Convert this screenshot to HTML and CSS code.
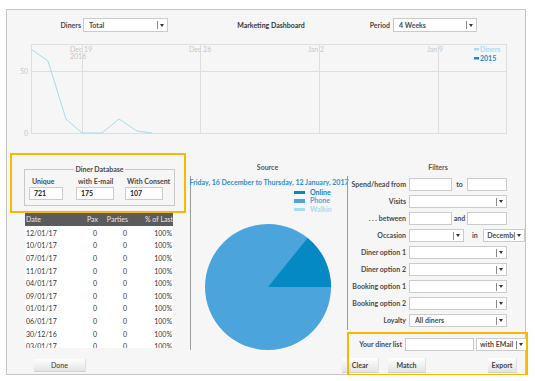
FILE: index.html
```html
<!DOCTYPE html>
<html>
<head>
<meta charset="utf-8">
<link rel="stylesheet" href="styles.css">
</head>
<body>
<div class="panel">
  <div class="topbar">
    <span class="tlabel l1">Diners</span>
    <div class="select s-diners"><span class="val">Total</span><span class="arrow"></span></div>
    <div class="title">Marketing Dashboard</div>
    <span class="tlabel l2">Period</span>
    <div class="select s-period"><span class="val">4 Weeks</span><span class="arrow"></span></div>
  </div>

  <svg class="trend" width="518" height="104" viewBox="0 0 518 104">
    <rect x="24.5" y="8.5" width="475" height="89" fill="none" stroke="#dedede"/>
    <g stroke="#dedede">
      <line x1="75.5" y1="8.5" x2="75.5" y2="97.5"/>
      <line x1="193.5" y1="8.5" x2="193.5" y2="97.5"/>
      <line x1="312.5" y1="8.5" x2="312.5" y2="97.5"/>
      <line x1="431.5" y1="8.5" x2="431.5" y2="97.5"/>
      <line x1="24.5" y1="35.5" x2="499.5" y2="35.5"/>
    </g>
    <g class="axis">
      <text x="21" y="38" text-anchor="end">50</text>
      <text x="21" y="100" text-anchor="end">0</text>
      <text x="63" y="15.5">Dec 19</text>
      <text x="63" y="22.5">2016</text>
      <text x="182" y="15.5">Dec 26</text>
      <text x="301" y="15.5">Jan 2</text>
      <text x="420" y="15.5">Jan 9</text>
    </g>
    <polyline points="24,13 41,25 59,83 75,97 95,97 112,83 130,95 145,97" fill="none" stroke="#a6dcee" stroke-width="1"/>
    <rect x="467" y="12" width="5" height="2.5" fill="#a9dcf0"/>
    <text class="lg1" x="473" y="15.5">Diners</text>
    <rect x="467" y="21" width="5" height="2.5" fill="#1a89c6"/>
    <text class="lg2" x="473" y="24.5">2015</text>
  </svg>

  <div class="main">
    <div class="col-left">
      <fieldset class="db">
        <legend>Diner Database</legend>
        <div class="dbfields">
          <div class="dbf f1"><span class="dbl">Unique</span><span class="inp dbv">721</span></div>
          <div class="dbf f2"><span class="dbl">with E-mail</span><span class="inp dbv">175</span></div>
          <div class="dbf f3"><span class="dbl">With Consent</span><span class="inp dbv">107</span></div>
        </div>
      </fieldset>
      <div class="tablewrap">
        <div class="trow thead"><span>Date</span><span>Pax</span><span>Parties</span><span>% of Last</span></div>
        <div class="tbody">
          <div class="trow"><span>12/01/17</span><span>0</span><span>0</span><span>100%</span></div>
          <div class="trow"><span>10/01/17</span><span>0</span><span>0</span><span>100%</span></div>
          <div class="trow"><span>07/01/17</span><span>0</span><span>0</span><span>100%</span></div>
          <div class="trow"><span>11/01/17</span><span>0</span><span>0</span><span>100%</span></div>
          <div class="trow"><span>04/01/17</span><span>0</span><span>0</span><span>100%</span></div>
          <div class="trow"><span>09/01/17</span><span>0</span><span>0</span><span>100%</span></div>
          <div class="trow"><span>01/01/17</span><span>0</span><span>0</span><span>100%</span></div>
          <div class="trow"><span>06/01/17</span><span>0</span><span>0</span><span>100%</span></div>
          <div class="trow"><span>30/12/16</span><span>0</span><span>0</span><span>100%</span></div>
          <div class="trow"><span>03/01/17</span><span>0</span><span>0</span><span>100%</span></div>
        </div>
      </div>
      <button class="btn done">Done</button>
    </div>

    <div class="col-center">
      <div class="ptitle">Source</div>
      <div class="frame">
        <div class="range"><span>Friday, 16 December to Thursday, 12 January, 2017</span></div>
        <ul class="legend">
          <li class="online"><i></i>Online</li>
          <li class="phone"><i></i>Phone</li>
          <li class="walkin"><i></i>Walkin</li>
        </ul>
        <svg class="pie" width="156" height="136" viewBox="0 0 156 136">
          <circle cx="77" cy="73" r="63" fill="#4ba4dc"/>
          <path d="M77 73 L140 73 A63 63 0 0 0 116.6 24 Z" fill="#0589c5"/>
        </svg>
      </div>
    </div>

    <div class="col-right">
      <div class="ptitle">Filters</div>
      <div class="filters">
        <div class="frow">
          <span class="flabel">Spend/head from</span>
          <span class="inp w43"></span>
          <span class="mid">to</span>
          <span class="inp w40"></span>
        </div>
        <div class="frow">
          <span class="flabel">Visits</span>
          <div class="select w98"><span class="val"></span><span class="arrow"></span></div>
        </div>
        <div class="frow">
          <span class="flabel">. . . between</span>
          <span class="inp w43"></span>
          <span class="mid">and</span>
          <span class="inp w40"></span>
        </div>
        <div class="frow">
          <span class="flabel">Occasion</span>
          <div class="select w57"><span class="val"></span><span class="arrow"></span></div>
          <span class="mid in">in</span>
          <div class="select w42"><span class="val">December</span><span class="arrow"></span></div>
        </div>
        <div class="frow gap">
          <span class="flabel">Diner option 1</span>
          <div class="select w98"><span class="val"></span><span class="arrow"></span></div>
        </div>
        <div class="frow">
          <span class="flabel">Diner option 2</span>
          <div class="select w98"><span class="val"></span><span class="arrow"></span></div>
        </div>
        <div class="frow">
          <span class="flabel">Booking option 1</span>
          <div class="select w98"><span class="val"></span><span class="arrow"></span></div>
        </div>
        <div class="frow">
          <span class="flabel">Booking option 2</span>
          <div class="select w98"><span class="val"></span><span class="arrow"></span></div>
        </div>
        <div class="frow">
          <span class="flabel">Loyalty</span>
          <div class="select w98"><span class="val bold">All diners</span><span class="arrow"></span></div>
        </div>
      </div>
      <div class="dinerlist">
        <span class="flabel dl">Your diner list</span>
        <span class="inp w69"></span>
        <div class="select w51"><span class="val bold">with EMail</span><span class="arrow"></span></div>
      </div>
      <div class="actions">
        <button class="btn clear">Clear</button>
        <button class="btn match">Match</button>
        <button class="btn export">Export</button>
      </div>
    </div>
  </div>

  <div class="hl hl-db"></div>
  <div class="hl hl-list"></div>
</div>
</body>
</html>
```

FILE: styles.css
```css
* { box-sizing: border-box; }
html, body { margin: 0; padding: 0; background: #fff; }
body {
  font-family: Lato, "Liberation Sans", sans-serif;
  font-size: 7px;
  color: #4a4a4a;
  line-height: 1;
}

.panel {
  position: relative;
  margin: 9px 0 0 6px;
  width: 520px;
  height: 366px;
  border: 1px solid #c4c4c4;
  background: #f6f6f6;
}

/* top bar */
.topbar {
  display: flex;
  align-items: center;
  height: 14px;
  margin-top: 8px;
}
.tlabel {
  display: flex;
  justify-content: flex-end;
  white-space: nowrap;
  font-weight: bold;
  color: #4a4a4a;
}
.l1 { width: 41px; margin-left: 33px; margin-right: 2px; }
.l2 { width: 16px; margin-right: 3px; }
.title {
  width: 206px;
  text-align: center;
  font-weight: bold;
  color: #383838;
}

.select {
  display: flex;
  align-items: center;
  height: 14px;
  background: #fff;
  border: 1px solid #cbcbcb;
  padding-left: 5px;
  font-weight: bold;
  color: #4a4a4a;
  overflow: hidden;
  white-space: nowrap;
}
.select .val { flex: 1; overflow: hidden; min-width: 0; }
.arrow {
  display: flex;
  align-items: center;
  justify-content: flex-end;
  flex: none;
  width: 7px;
  height: 8px;
  border-left: 1px solid #8a8a8a;
  margin-right: 3px;
}
.arrow::after {
  content: "";
  border-left: 2.5px solid transparent;
  border-right: 2.5px solid transparent;
  border-top: 3px solid #333;
}
.s-diners { width: 85px; }
.s-period { width: 84px; }

/* trend chart */
.trend { display: block; margin-top: 4px; }
.trend text { font-family: Lato, "Liberation Sans", sans-serif; font-size: 7px; }
.axis text { fill: #c6c6c6; }
.lg1 { fill: #a9dcf0; font-weight: bold; }
.lg2 { fill: #1a89c6; font-weight: bold; }

/* main area */
.main { display: flex; height: 234px; }
.col-left { width: 181px; display: flex; flex-direction: column; }
.col-center { width: 159px; display: flex; flex-direction: column; }
.col-right { width: 178px; display: flex; flex-direction: column; }

/* diner database */
.db {
  margin: 25px 0 0 17px;
  padding: 0 4px 5px 4px;
  width: 151px;
  border: 1px solid #c8c8c8;
  min-width: 0;
}
.db legend {
  margin: 0 auto;
  padding: 0 1px;
  font-weight: bold;
  color: #4a4a4a;
  line-height: 8px;
}
.dbfields { display: flex; margin-top: 5px; }
.dbf { display: flex; flex-direction: column; }
.dbl {
  height: 9px;
  white-space: nowrap;
  font-weight: bold;
  color: #4a4a4a;
  margin-left: 3px;
}
.f1 { width: 34px; margin-left: 0; }
.f2 { width: 38px; margin-left: 13px; }
.f2 .dbl, .f3 .dbl { margin-left: 2px; }
.f3 { width: 38px; margin-left: 11px; }
.inp {
  display: flex;
  align-items: center;
  height: 13px;
  background: #fff;
  border: 1px solid #cbcbcb;
  flex: none;
}
.dbv { padding-left: 4px; font-weight: bold; color: #222; height: 13px; }

/* table */
.tablewrap {
  margin: 7px 0 0 18px;
  width: 148px;
  height: 135px;
  overflow: hidden;
  background: #fff;
}
.trow {
  display: grid;
  grid-template-columns: 50px 23px 30px 45px;
  align-items: center;
  height: 12.6px;
  color: #333;
}
.trow span { white-space: nowrap; text-align: right; }
.trow span:first-child { text-align: left; padding-left: 1px; }
.trow span:nth-child(2), .trow span:nth-child(3) { padding-right: 1px; }
.trow span:last-child { padding-right: 1px; }
.thead {
  height: 13px;
  background: #5b5b5b;
  color: #e6e6e6;
}
.thead span:nth-child(2), .thead span:nth-child(3) { padding-right: 0; }
.thead span:last-child { padding-right: 0; }
.tbody { padding-top: 1px; }

/* buttons */
.btn {
  font-family: Lato, "Liberation Sans", sans-serif;
  font-size: 7px;
  font-weight: bold;
  color: #444;
  padding: 0;
  border: 0;
  border-bottom: 1px solid #d2d2d2;
  border-right: 1px solid #e0e0e0;
  background: linear-gradient(#fefefe, #e4e4e4);
}
.done { margin: 11px 0 0 27px; width: 52px; height: 13px; font-weight: normal; color: #333; }

/* center */
.ptitle {
  margin-top: 22px;
  height: 10px;
  line-height: 10px;
  text-align: center;
  font-weight: bold;
  color: #555;
}
.frame {
  margin: 4px 0 0 2px;
  height: 174px;
  border-left: 1px solid #9c9c9c;
  display: flex;
  flex-direction: column;
}
.range {
  display: flex;
  justify-content: center;
  margin-top: 1px;
  height: 10px;
  line-height: 10px;
  white-space: nowrap;
  color: #2b90d0;
  font-weight: bold;
}
.legend {
  list-style: none;
  margin: 1px 0 0 103px;
  padding: 0;
}
.legend li {
  display: flex;
  align-items: center;
  height: 8.5px;
  font-weight: bold;
}
.legend i { width: 11px; height: 3.5px; margin-right: 5px; }
.online { color: #0a86c4; }
.online i { background: #0a86c4; }
.phone { color: #4ba4dc; }
.phone i { background: #4ba4dc; }
.walkin { color: #a8dcf0; }
.walkin i { background: #a8dcf0; }
.pie { display: block; margin-top: 0.5px; }

/* right */
.col-right .ptitle { padding-left: 4px; }
.filters {
  margin-top: 4px;
  height: 154px;
  border-left: 1px solid #9c9c9c;
  padding-top: 2px;
}
.frow {
  display: flex;
  align-items: center;
  height: 13px;
  margin-bottom: 4px;
}
.frow.gap { margin-top: 3px; }
.flabel {
  display: flex;
  justify-content: flex-end;
  width: 58px;
  margin-right: 3px;
  white-space: nowrap;
  font-weight: bold;
  color: #4a4a4a;
  flex: none;
}
.mid { width: 15px; text-align: center; font-weight: bold; color: #4a4a4a; flex: none; }
.mid.in { width: 19px; padding-left: 2px; }
.select.w98, .select.w57, .select.w42, .select.w51 { height: 13px; }
.w43 { width: 43px; }
.w40 { width: 40px; }
.w98 { width: 98px; }
.w57 { width: 57px; }
.w42 { width: 43px; padding-left: 3px; }
.w69 { width: 69px; }
.w51 { width: 51px; margin-left: 2px; flex: none; padding-left: 3px; }
.bold { font-weight: bold; }

.dinerlist {
  display: flex;
  align-items: center;
  height: 13px;
  margin-top: 8px;
}
.flabel.dl { width: 55px; margin-right: 3px; }
.actions {
  display: flex;
  margin: 7px 0 0 -5px;
}
.clear { width: 37px; height: 15px; }
.match { width: 38px; height: 15px; margin-left: 9px; }
.export { width: 29px; height: 15px; margin-left: auto; margin-right: 8px; }

/* highlight annotations */
.hl {
  position: absolute;
  border: 2px solid #fbb800;
  pointer-events: none;
}
.hl-db { left: 3px; top: 143px; width: 176px; height: 60px; }
.hl-list { left: 340px; top: 322px; width: 181px; height: 44px; }
```
